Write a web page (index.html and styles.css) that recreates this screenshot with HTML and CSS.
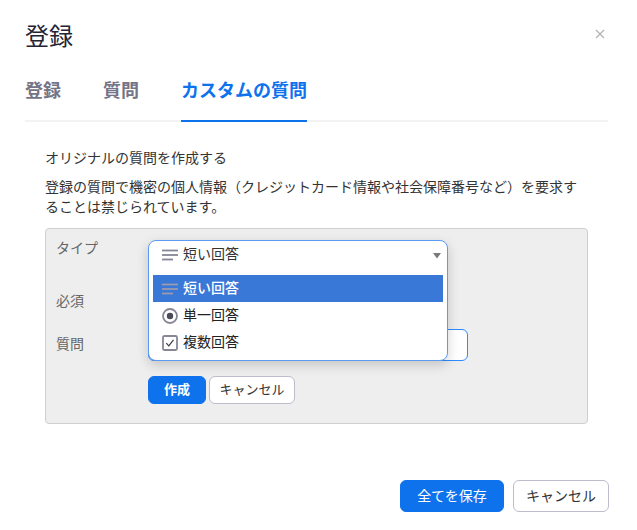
FILE: index.html
```html
<!DOCTYPE html>
<html lang="ja">
<head>
<meta charset="utf-8">
<title>登録</title>
<link rel="stylesheet" href="styles.css">
</head>
<body>
<div class="modal">
  <header class="head">
    <h1 class="title">登録</h1>
    <button class="close" aria-label="閉じる">
      <svg width="10" height="10" viewBox="0 0 10 10"><path d="M1 1 L9 9 M9 1 L1 9" stroke="#b4b4b4" stroke-width="1.3" fill="none"/></svg>
    </button>
  </header>
  <nav class="tabs">
    <a class="tab">登録</a>
    <a class="tab">質問</a>
    <a class="tab active">カスタムの質問</a>
  </nav>
  <section class="content">
    <p class="lead">オリジナルの質問を作成する</p>
    <p class="note">登録の質問で機密の個人情報（クレジットカード情報や社会保障番号など）を要求することは禁じられています。</p>
    <div class="form-box">
      <div class="row row-type">
        <span class="label">タイプ</span>
        <div class="select">
          <div class="dropdown">
            <div class="select-head">
              <svg class="ico" width="16" height="12" viewBox="0 0 16 12"><rect x="0" y="0.6" width="16" height="1.8" fill="#868696"/><rect x="0" y="5.1" width="16" height="1.8" fill="#868696"/><rect x="0" y="9.6" width="11" height="1.8" fill="#868696"/></svg>
              <span class="txt">短い回答</span>
              <svg class="caret" width="8" height="6" viewBox="0 0 8 6"><path d="M0 0 H8 L4 5.5 Z" fill="#7a7a7a"/></svg>
            </div>
            <ul class="options">
              <li class="opt selected">
                <svg class="ico" width="16" height="12" viewBox="0 0 16 12"><rect x="0" y="0.6" width="16" height="1.8" fill="#9a9ab0"/><rect x="0" y="5.1" width="16" height="1.8" fill="#9a9ab0"/><rect x="0" y="9.6" width="11" height="1.8" fill="#9a9ab0"/></svg>
                <span class="txt">短い回答</span>
              </li>
              <li class="opt">
                <svg class="ico" width="16" height="16" viewBox="0 0 16 16"><circle cx="8" cy="8" r="7" stroke="#868696" stroke-width="1.8" fill="none"/><circle cx="8" cy="8" r="3.2" fill="#4a4a58"/></svg>
                <span class="txt">単一回答</span>
              </li>
              <li class="opt">
                <svg class="ico" width="16" height="16" viewBox="0 0 16 16"><rect x="1" y="1" width="14" height="14" rx="1.5" stroke="#868696" stroke-width="1.8" fill="none"/><path d="M4.3 8.2 L6.8 10.8 L11.5 4.8" stroke="#3a3a48" stroke-width="1.2" fill="none"/></svg>
                <span class="txt">複数回答</span>
              </li>
            </ul>
          </div>
        </div>
      </div>
      <div class="row row-req">
        <span class="label">必須</span>
        <div></div>
      </div>
      <div class="row row-q">
        <span class="label">質問</span>
        <div class="input"></div>
      </div>
      <div class="actions">
        <button class="btn btn-primary btn-sm">作成</button>
        <button class="btn btn-default btn-sm">キャンセル</button>
      </div>
    </div>
  </section>
  <footer class="footer">
    <button class="btn btn-primary btn-lg save">全てを保存</button>
    <button class="btn btn-default btn-lg cancel">キャンセル</button>
  </footer>
</div>
</body>
</html>
```

FILE: styles.css
```css
* { box-sizing: border-box; }
body {
  margin: 0;
  background: #fff;
  color: #222;
  font-family: "Noto Sans CJK JP", "Noto Sans", sans-serif;
}
.modal {
  padding: 19px 29px 0 25px;
}
.head {
  display: flex;
  justify-content: space-between;
  align-items: center;
  height: 32px;
}
.title {
  margin: 0;
  font-size: 24px;
  font-weight: 400;
  line-height: 32px;
  color: #232333;
}
.close {
  border: 0;
  background: none;
  padding: 0;
  margin: 0 3px 2px 0;
  width: 10px;
  height: 10px;
  display: flex;
}
.tabs {
  display: flex;
  gap: 42px;
  margin-top: 26px;
  border-bottom: 2px solid #f3f3f3;
}
.tab {
  font-size: 18px;
  font-weight: 700;
  line-height: 24px;
  color: #747487;
  padding-bottom: 19px;
  border-bottom: 2px solid transparent;
  margin-bottom: -2px;
}
.tab.active {
  color: #0e72ed;
  border-bottom-color: #0e72ed;
}
.content {
  padding: 25px 20px 0;
}
.lead, .note {
  margin: 0;
  font-size: 14px;
  line-height: 20px;
  color: #333;
}
.lead { margin-bottom: 9px; }
.form-box {
  margin-top: 12px;
  background: #eeeeee;
  border: 1px solid #cfcfcf;
  border-radius: 4px;
  padding: 11px 10px 19px 10px;
}
.row {
  display: grid;
  grid-template-columns: 92px auto;
  align-items: start;
}
.label {
  font-size: 14px;
  line-height: 20px;
  color: #666;
}
.row-type { height: 32px; }
.row-type .label { margin-top: -3px; }
.row-req { margin-top: 20px; height: 20px; }
.row-req .label { margin-top: -2px; }
.row-q { margin-top: 17px; align-items: center; }
.row-q .label { padding-bottom: 4px; }
.select {
  position: relative;
  width: 300px;
  height: 32px;
}
.dropdown {
  position: absolute;
  top: 0;
  left: 0;
  width: 300px;
  background: #fff;
  border: 1px solid #5b9bf2;
  border-radius: 8px;
  box-shadow: 0 4px 12px rgba(0, 0, 0, 0.18);
  padding-bottom: 4px;
  z-index: 2;
}
.select-head {
  height: 31px;
  display: flex;
  align-items: center;
  gap: 5px;
  padding: 0 6px 2px 13px;
  font-size: 14px;
  color: #333;
}
.select-head .txt { margin-top: -5px; }
.select-head .ico { margin-top: -2px; }
.caret { margin-left: auto; }
.options {
  list-style: none;
  margin: 0 4px;
  padding: 3px 0 0;
}
.opt {
  height: 27px;
  display: flex;
  align-items: center;
  gap: 5px;
  padding-left: 9px;
  font-size: 14px;
  color: #222;
}
.opt .txt { margin-top: -4px; }
.opt.selected {
  background: #3a78d8;
  color: #fff;
  font-weight: 500;
}
.ico { flex: none; }
.input {
  width: 320px;
  height: 32px;
  background: #fff;
  border: 1px solid #2d8cff;
  border-radius: 6px;
}
.actions {
  margin: 15px 0 0 92px;
  display: flex;
  gap: 3px;
}
.btn {
  font-family: inherit;
  border-radius: 6px;
  cursor: pointer;
  display: flex;
  align-items: center;
  justify-content: center;
  padding: 0 0 3px;
}
.btn-primary {
  background: #0e72ed;
  color: #fff;
  border: 1px solid #0e72ed;
}
.btn-default {
  background: #fff;
  color: #333;
  border: 1px solid #bdbccc;
}
.btn-sm {
  height: 28px;
  font-size: 13px;
}
.actions .btn-primary { width: 58px; font-weight: 700; }
.actions .btn-default { width: 86px; }
.footer {
  display: flex;
  justify-content: flex-end;
  gap: 9px;
  margin: 56px -1px 0 0;
}
.btn-lg {
  height: 32px;
  font-size: 14px;
  padding-bottom: 2px;
}
.save { width: 104px; }
.cancel { width: 96px; }
```
